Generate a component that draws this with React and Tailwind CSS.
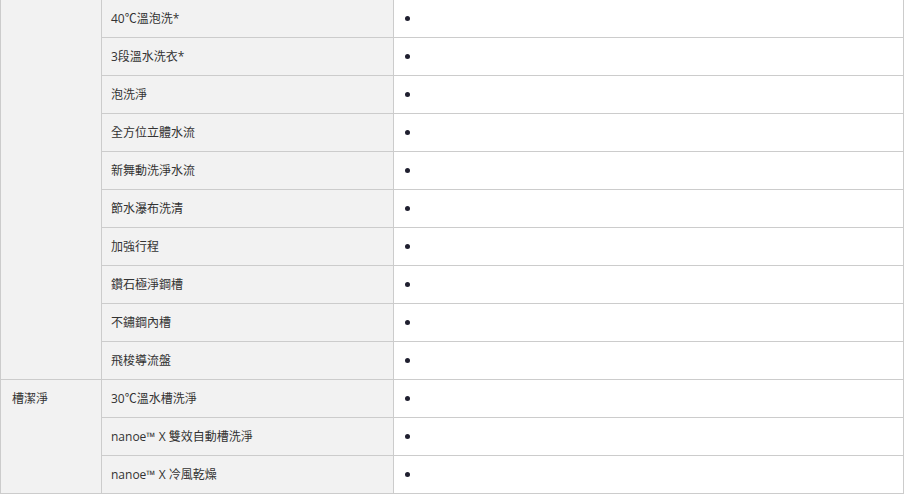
import React from "react";

const groups = [
  {
    label: "",
    rows: [
      "40℃溫泡洗*",
      "3段溫水洗衣*",
      "泡洗淨",
      "全方位立體水流",
      "新舞動洗淨水流",
      "節水瀑布洗清",
      "加強行程",
      "鑽石極淨鋼槽",
      "不鏽鋼內槽",
      "飛梭導流盤",
    ],
  },
  {
    label: "槽潔淨",
    rows: ["30℃溫水槽洗淨", "nanoe™ X 雙效自動槽洗淨", "nanoe™ X 冷風乾燥"],
  },
];

export default function App() {
  return (
    <div
      className="w-[905px] h-[494px] overflow-hidden bg-white text-[12px] text-[#333]"
      style={{ fontFamily: '"Open Sans", "Noto Sans CJK TC", sans-serif' }}
    >
      {groups.map((g, gi) => (
        <div key={gi} className="flex w-[904px]">
          <div className="w-[102px] shrink-0 border-x border-b border-[#cccccc] bg-[#f2f2f2] pl-[11px] pt-[10px] leading-[17px]">
            {g.label}
          </div>
          <div className="flex flex-col">
            {g.rows.map((r, ri) => (
              <div key={ri} className="flex h-[38px] border-b border-[#cccccc]">
                <div className="w-[292px] shrink-0 border-r border-[#cccccc] bg-[#f2f2f2] pl-[9px] flex items-center">
                  {r}
                </div>
                <div className="w-[510px] shrink-0 border-r border-[#cccccc] bg-white pl-[11px] flex items-center">
                  <span className="block w-[5px] h-[5px] rounded-full bg-[#1f1f2f]" />
                </div>
              </div>
            ))}
          </div>
        </div>
      ))}
    </div>
  );
}
